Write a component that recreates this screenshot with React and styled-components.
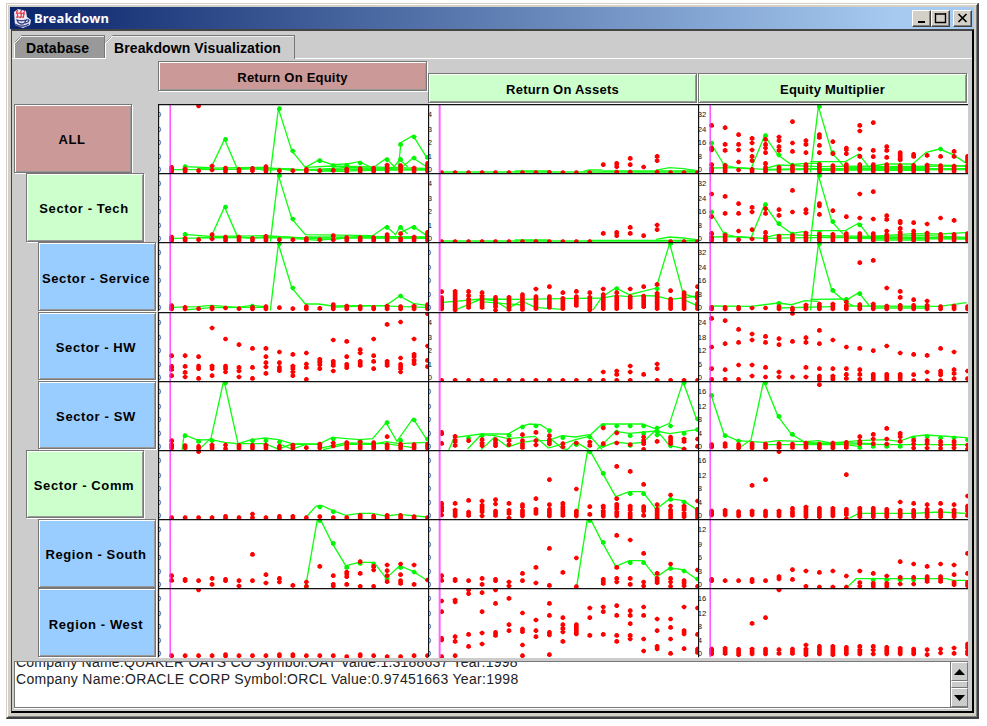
import React from "react";
import styled, { createGlobalStyle } from "styled-components";

const Global = createGlobalStyle`
  * { box-sizing: border-box; }
  body { margin: 0; background: #fff; font-family: "Liberation Sans", Arial, sans-serif; overflow: hidden; }
`;

const Window = styled.main`
  width: 973px;
  height: 716px;
  margin: 3px 0 0 6px;
  padding: 3px 3px 4px 3px;
  background: #d4d0c8;
  border: 1px solid #d4d0c8;
  border-right: 2px solid #404040;
  border-bottom: 2px solid #404040;
  box-shadow: inset 1px 1px #fff, inset -1px -1px #808080;
  display: flex;
  flex-direction: column;
`;

const TitleBar = styled.header`
  height: 22px;
  flex: none;
  display: flex;
  align-items: center;
  padding: 0 2px 0 3px;
  background: linear-gradient(90deg, #0a246a, #a6caf0 92%);
  color: #fff;
`;

const Title = styled.h1`
  margin: 0 auto 0 3px;
  font: bold 13px/20px "Noto Sans", sans-serif;
  letter-spacing: 0.2px;
`;

const WindowButton = styled.button`
  width: 19px;
  height: 17px;
  padding: 0;
  margin-left: ${(p) => (p.$gap ? "3px" : "0")};
  display: grid;
  place-items: center;
  background: #d4d0c8;
  border: 1px solid;
  border-color: #fff #404040 #404040 #fff;
  box-shadow: inset -1px -1px #808080;
`;

const Client = styled.section`
  flex: 1;
  min-height: 0;
  margin-left: 1px;
  display: flex;
  flex-direction: column;
  background: #ccc;
  border: 2px solid #000;
  border-top: 2px solid #444;
  border-left: 1px solid #444;
`;

const Tabs = styled.nav`
  display: flex;
  flex: none;
  height: 28px;
  padding: 4px 0 0 2px;
  box-shadow: inset 0 -1px #fff;
`;

const Tab = styled.button`
  width: ${(p) => p.$width}px;
  height: ${(p) => (p.$active ? 24 : 23)}px;
  padding: ${(p) => (p.$active ? "1px 0 0 9px" : "2px 0 0 12px")};
  border: 0;
  text-align: left;
  font: bold 14px "Liberation Sans", Arial, sans-serif;
  letter-spacing: ${(p) => p.$spacing}px;
  white-space: nowrap;
  color: #000;
  background: ${(p) => (p.$active ? "#ccc" : "#999")};
  clip-path: polygon(0 8px, 8px 0, 100% 0, 100% 100%, 0 100%);
  background-image: linear-gradient(135deg, transparent 5px, #777 5px, #777 6px, #fff 6px, #fff 7px, transparent 7px);
  box-shadow: inset 0 1px #777, inset -1px 0 #777, inset 1px 0 #fff, inset 0 2px #eee;
`;

const Board = styled.div`
  display: grid;
  grid-template-columns: 144px 810px;
  grid-template-rows: 45px 554px;
  padding-left: 2px;
  flex: none;
`;

const Headers = styled.div`
  grid-column: 2;
  display: grid;
  grid-template-columns: repeat(3, 270px);
`;

const Plate = styled.button`
  height: ${(p) => (p.$tall ? 68.5 : 30)}px;
  width: ${(p) => (p.$tall ? 118 : 269)}px;
  margin-left: ${(p) => p.$indent || 0}px;
  margin-top: ${(p) => p.$drop || 0}px;
  padding: ${(p) => (p.$tall ? "3px 2px 0 0" : "2px 0 0")};
  white-space: nowrap;
  color: #000;
  font: bold 13px "Liberation Sans", Arial, sans-serif;
  letter-spacing: ${(p) => (p.$tall ? 0.62 : 0.22)}px;
  background: ${(p) => p.$color};
  border: 1px solid #777;
  box-shadow: inset 1px 1px #fff, inset -1px -1px #999, 1px 1px #fff;
`;

const RowLabels = styled.div`
  display: grid;
  grid-template-rows: repeat(8, 69.2px);
`;

const Charts = styled.div`
  display: grid;
  grid-template-columns: repeat(3, 270px);
  grid-template-rows: repeat(8, 69.2px);
`;

const Plot = styled.svg`
  display: block;
  width: 270px;
  height: 69.2px;
  background: #fff;
  overflow: hidden;
`;

const Axis = styled.text`
  font: 23px "Liberation Sans", Arial, sans-serif;
  fill: #111;
`;

const Log = styled.div`
  flex: none;
  width: 954px;
  height: 47px;
  margin: 3px 0 0 2px;
  display: flex;
  background: #fff;
  border: 1px solid #777;
  border-right: 0;
  box-shadow: 0 1px #fff;
`;

const LogText = styled.div`
  flex: 1;
  height: 45px;
  overflow: hidden;
  padding-left: 1px;
`;

const LogLine = styled.p`
  margin: ${(p) => (p.$first ? "-8px" : "0")} 0 0;
  font-size: 14px;
  line-height: 17px;
  letter-spacing: ${(p) => p.$spacing}px;
  white-space: nowrap;
  color: #222;
`;

const ScrollBar = styled.div`
  width: 18px;
  display: grid;
  grid-template-rows: 19px 7px 19px;
  background: #ccc;
  border-left: 1px solid #777;
`;

const ScrollPart = styled.div`
  display: grid;
  place-items: center;
  background: #ccc;
  border: 1px solid;
  border-color: #fff #777 #777 #fff;
`;

const PINK = "#cc9999";
const MINT = "#ccffcc";
const SKY = "#99ccff";

const rows = [
  { label: "ALL", color: PINK, indent: 0 },
  { label: "Sector - Tech", color: MINT, indent: 12 },
  { label: "Sector - Service", color: SKY, indent: 24 },
  { label: "Sector - HW", color: SKY, indent: 24 },
  { label: "Sector - SW", color: SKY, indent: 24 },
  { label: "Sector - Comm", color: MINT, indent: 12 },
  { label: "Region - South", color: SKY, indent: 24 },
  { label: "Region - West", color: SKY, indent: 24 },
];

const ZERO = "0 0 0 0 0";
const ONES = "4 3 2 1 0";

// Each plot: top is the y of its upper edge; red lists marks (y or y-y spans) per year;
// green lists "year:y" marks; lines are "year y" pairs.
const plots = [
  {
    top: 20, axis: ZERO,
    red: "210-222,215-222,26 220,206 218,212-222,216-222,213-220,208-222,220,220,216-222,220,219,215-222,214-222,212-222,203-222,205-222,212-222,198-222",
    green: "1:208 4:126 8:34 9:161 11:190 12:205 13:204 14:197 16:187 17:141 17:186 18:119 18:182 19:180",
    lines: ["0 217 5 216 8 213 12 222 19 215", "1 208 3 211 4 126 4.95 214", "7.4 227 8 34 9 161 10 210 11 188 12 202 13 200 14 193 15 212 16 183 16.6 208 17 187 17.6 208", "16.9 215 17.1 136 18 114 19 180", "17 215 18 182 19 208", "10 210 12 206 19 213", "10 220 13 210 19 217", "2 213 7 210 9 219 11 216 15 214", "5 215 6 211 7 219 9 214", "10 216 19 218", "11 223 12 218 13 223"],
  },
  {
    top: 20, axis: ONES,
    red: "226,226,226,226,226,226,226,226,225,226,226,226,202,198 208 224,183 202 224,209,177 190 224,226,226,226",
    green: "", lines: ["0 224 19 224", "5.5 221 8 221", "10.6 222 11 218 12 218", "12 221 19 221", "16 218 17 211 18 214 19 220"],
  },
  {
    top: 20, axis: "32 24 16 8 0",
    red: "84 152-158 202 212-222,91 141 159 205-222,112 141 158 194 218,123 137 158 177 190 216-222,126 141 152 166 198 210-222,119 130 148 159 210-222,73 137 162 206-222,130 141 166 202-222,112-120 144 166 202-222,133 169 205-222,152-157 169 202-222,84 101 155 177 202-222,76 159 178 202-222,148 159 180 202-222,166-180 188 205-222,171 177 204-222,174 203-222,177 205-222,162 177 206-222,177-192 205-222",
    green: "0:137 1:203 4:115 5:173 6:203 8:27 8:199 9:166 17:155",
    lines: ["0 137 1 203 2 212 3 214 4 115 5 173 6 202 7 198 8 198", "0 212 2 211 4 216 7 214 19 214", "7.4 225 8 27 9 166 10 212", "7.4 193 10 193 11 170 11.8 212", "4 214 5 203 8 208 12 206 13 200 15 200 16 165 17 155 18 172 19 198", "10 212 12 208 19 206", "8 219 19 217", "16 202 19 206", "4 218 8 216 19 216", "12 211 16 211", "12 219 16 219"],
  },
  {
    top: 228, axis: ZERO,
    red: "420-430,424-430,428,413 426,420-430,420-430,424-430,418-430,428,428,425-430,428,416 428,422-430,422-430,422-430,413-430,410 425-430,420-430,406-430",
    green: "1:412 4:330 8:235 9:366 16:391 17:391 18:391",
    lines: ["0 424 5 422 19 424", "3 420 4 330 4.95 418", "7.4 434 8 235 9 366 10 413 15 416 16 388 16.7 413 17 391 17.6 410", "17 408 18 388 19 415", "1 412 3 418 7 416 12 428 14 418 19 420", "9 424 11 430 13 421", "2 421 5 420 6 424 7 419 9 421", "10 420 19 421"],
  },
  {
    top: 228, axis: ONES,
    red: "434,434,434,434,434,434,434,434,434,434,434,434,409,406 416,391 409,416,384 398,434,434,434",
    green: "", lines: ["0 432 19 432", "5.5 429 8 429", "11 430 19 430", "16 427 17 420 18 423 19 428"],
  },
  {
    top: 228, axis: "32 24 16 8 0",
    red: "291 359 409 420-430,298 349 415-430,320 349 402 428,331 345 398 426,335 349 406 418-430,338 355 418-430,280 345 416-430,338 348 408-430,320-327 352 412-430,341 412-430,359 410-430,291 363 410-430,284 366 410-430,356 367 402 413-430,373-378 394 406-430,377 402 410-430,381 408-430,363 412-430,370 412-430,410-430",
    green: "0:345 1:411 4:323 5:380 6:411 8:235 8:406 9:374 11:384",
    lines: ["0 345 1 411 2 420 3 422 4 323 5 380 6 409 7 403", "0 420 2 419 4 424 7 422 19 422", "7.4 434 8 235 9 374 10 418", "7.4 401 10 401 11 378 11.8 420", "4 422 5 412 8 416 12 418 15 410 17 411 19 407", "10 424 19 426", "12 418 16 416 19 421", "12 429 16 429", "8 420 19 423"],
  },
  {
    top: 436, axis: ZERO,
    red: "627-637,632-637,636,632-637,634,636,632-637,630-637,633,636,630-637,635,624-637,628-637,630-637,632-637,628-637,630-637,628-637,624-637",
    green: "6:628 8:442 9:574 17:598",
    lines: ["0 632 2 630 3 626 5 632 6 626 7 630", "7.4 641 8 442 9 574 10 622 11 622 12 628 16 626 17 598 18 620 19 626", "12 632 15 627 19 632", "1 640 3 633 7 632"],
  },
  {
    top: 436, axis: ZERO,
    red: "585 603-637,584-640,584 596 607-632,588 598-632,602-630 640,602-638,594-638,577 600-636,570 600-632,588 605-636,584 600-626,588 602-632 640,577 594-636,588 600-636,577 600-632,570 598-630,563 590-636,582 607-636,588-636,570 590-606 620-636",
    green: "13:576 16:576 17:440",
    lines: ["0 618 3 607 6 608 9 606 12 604 13 597 14 600 15 597 16 598 17 608 18 604 19 598", "1.2 638 3 607 4 612 5 636 6 612 7 632 9 638", "11.3 640 12 600 13 574 14 594 16 574 17 440 18 590 19.3 608", "17.8 604 18.3 613 19 626", "3 615 6 625"],
  },
  {
    top: 436, axis: "32 24 16 8 0",
    red: "632-637,632-637,632-637,634,634,630-637,634-640,625-637,622-637,622-637,616 626-637,498 624-637,491 622-637,574 628-637,584 602 626-637,609 626-637,613 626-637,630-637,628-637,630-637",
    green: "5:620 8:442 9:581 10:608 11:591",
    lines: ["0 628 3 629 5 619 6 624 7 612 8 614", "7.4 641 8 442 9 581 10 615 10.6 628", "7.4 608 10.2 607 11 588 11.8 628", "12 634 16 634", "10 628 17 629 19 618", "5 634 9 630"],
  },
  {
    top: 8, axis: ZERO,
    red: "139 171 180 199,139 171 189 203,142 170-178 207,56 170-178 199,89 170-178 188,106 174 185 203,117 174 207,117 142 160 173 192,128 160 174-184,135 170-178 188 199,131 164 174 210,150 158-166 178,92 156-168 185,96 142 165-175,121 131 156-168,89 139 156 178,45 156-168,38 146 165-177 188,89 135-142 153 163,13 110 153 172",
    green: "", lines: [],
  },
  {
    top: 8, axis: ONES,
    red: "213,213,213,213,213,213,213,213,213,213,213,213,188 213,185 195 213,170 188 213,195,164 178 213,213,213,213",
    green: "", lines: [],
  },
  {
    top: 8, axis: "24 18 12 6 0",
    red: "27 113 178 210,34 103 181 210,60 99 167 210,74 92 167 200,81 99 174 203,88 106 188 203,12 96 203,85 99 174 203,63 103 178 200-210,92 178 200-210,113 178 195 207,117 181 195 210,124 195-205 214,110 195-205 214,131 195-205 214,135 196 214,138 188 214,117 185-197 214,128 181 192 208,185 208",
    green: "", lines: [],
  },
  {
    top: 214, axis: ZERO,
    red: "393 405-415,408-415,410-416,406-416,406 417,407-416,407-416,406-416,410-416,406-416,414,403-415,400 409,399-416,397 408-416,399-416,381 405-416,403-416,405-416,403-416",
    green: "1:378 2:395 3:393 4:220 6:393 7:393 8:397 12:388 14:395 16:339 17:392 18:331 19:388",
    lines: ["0.85 421 1 375 2 391 3 390 4 398 5 402 6 390 7 385 8 390 9 402 11 403 12 383 14 390 15 387 16 339 16.8 395 18 326 19 388", "2.2 416 3 385 3.9 220 4 220 5 402 7 402 8 418", "8 402 9 418 10 405", "8 418 9 403 11 404", "11.3 420 13 404 15 404 16 396 17 402 19 398", "11 416 13 400 16 402 18 414"],
  },
  {
    top: 214, axis: ZERO,
    red: "368-372 401,380 392-396 407,393,390 400-408,390 398-408,392 405,375 393 403-413,368 393 406,378 390-403,402 412,400,397 407,355 402,370 400,405,382 392-402 419,395,382-402,388-395 418,388 410",
    green: "2:385 3:378 5:377 6:352 7:349 8:363 9:384 10:405 11:382 12:348 12:407 13:349 13:367 14:349 14:378 14:407 15:349 15:371 16:355 16:365 16:376 17:349 17:409 18:220 18:371 19:328 19:360",
    lines: ["0.6 421 1 384 3 373 5 373 6 350 6.6 343 7.4 345 8 360", "2 418 3 375 4 378 5 387 7 380 8 415 9 403 10 390 11 380 12 343 15 343 16 358 17 341 18 216 19 328", "3 420 4 382 5 412 6 398 7 393 8 392 9 378 10 382 11 375 12 420", "8 382 9 415 9.4 420 10 395 11 420", "11.6 420 13 365 14 371 16 364 17 372 19 360", "12 412 13 397 14 402 15 398 16 360 17 408 18 416"],
  },
  {
    top: 214, axis: "16 12 8 4 0",
    red: "405-412,402-410,405-415,402-415,403-413,402-413,403-413,400-413,225 403-415,400-415,398-413,381 395 403,374 388 402,356 388 403,371 381 395,392 403 415,392 402 415,395 405 416,395 405 415,406 418",
    green: "0:257 1:378 2:394 4:220 5:320 6:374 11:413 12:410 13:410 14:410 15:385 16:381 17:385 18:385 19:390",
    lines: ["0 252 1 375 2 393 4 398 5 393 7 396 8 393 9 400 11 393 13 390 14 395 15 380 16 376 19 384", "2 418 3 390 3.9 220 4 220 5 320 6 374 7 398 9 402 13 405 19 405", "4 405 10 405 11 410", "7 402 10 399 12 402"],
  },
  {
    top: 422, axis: ZERO,
    red: "625,625,427 625,625,621-626,625,614 625,625,621-626,621-626,625,622,625,625,618-626,620-626,618-626,618-626,622-626,625",
    green: "11:593 12:607",
    lines: ["10 626 10.8 590 11.2 588 12 603 13 618 14 612 15 612 16 620 17 615 19 623"],
  },
  {
    top: 422, axis: ZERO,
    red: "582 592-604 617,582 602-620,573 608-618,575 588 595-608 620,571 584 605-618,582 603-612 626,586-592 603-620,568 600-612,511 586 600-620,582 592-618,539 605-620,592 615,590-595 605-620,471 568 585-598 608-620,486 590-602 612-625,525 592-605 618,586 600-628,557 590 602-625,590-600 612-622,575 600-625",
    green: "11:428 12:492 14:553 15:553 17:570 18:578 19:600",
    lines: ["10.1 625 10.9 425 11.1 425 12 490 13 562 14 547 15 547 16 600 17 568 18 574 19 600"],
  },
  {
    top: 422, axis: "16 12 8 4 0",
    red: "605-617,603-617,607-620,528 605-617,511 605-620,427 605-620,597 607-618,593-622,597-622,597-620,496 600-615 628,597 607-622,597-622,600-622,578 603-622,582 603-622,586 600-622,582 603-622,586 602-622,560 590-605 618",
    green: "",
    lines: ["10.3 626 11 612 15 612 17 608 19 612"],
  },
  {
    top: 15, axis: ZERO,
    red: "185 199,196-200,200,193 211,196-200,200 216,121 200,182 207,193 204,214,204 217,157,185 211-216,174-180 188 211,143 178 217,157 168 217,153 170 185 203,150 182 200-208,153 211,198",
    green: "10:217 11:20 12:88 13:160 14:148 15:150 16:193 17:160 18:174",
    lines: ["10.1 200 10.9 15 11.1 15 12 88 13 155 14 145 15.1 145 16 193 17 155 18 172 19 198"],
  },
  {
    top: 15, axis: ZERO,
    red: "185 199,196-200,200,193 211,196-200,204 216,178 200,160 207,103 214,175,132 218,,196-208,64 160 193 204,78 193 211,118 204 216,178 193-206,150 193 204 217,200-206 215,168 217",
    green: "11:20 12:85 14:146 15:146 17:163 18:171 19:195",
    lines: ["10.1 218 10.9 13 11.1 13 12 85 13 157 14 140 15 140 16 190 17 162 18 167 19 195"],
  },
  {
    top: 15, axis: "12 9 6 3 0",
    red: "196-200,200,200,196-203,200,188-195,167 196,171 217,175 219,171 219,186 219,171 206 217,178 208-217,186 208-217,143 190 210,150 190 210,157 188-202,150 188-202,153 182 205-212,118 178 205-215",
    green: "12:198 13:198 14:198 15:198",
    lines: ["10.2 217 10.8 194 17.5 194 18 199 19 199"],
  },
  {
    top: 222, axis: ZERO,
    red: "425,425,228 425,425,422-426,425,425,425,422-426,422-426,425,425,425,428,422-426,425,428,428,425,425",
    green: "", lines: [],
  },
  {
    top: 222, axis: ZERO,
    red: "261 293 373-378 428,258-264 368 382 425,228 239 361 397,236 293 357 390,228 268 355-364,253 332 350,297 345-353 393 425,318 350 368,268 304 355-363 422,311 332 343 354 382,332-346 354-360,282 311 364,279 293 361,275 304 364 382,290 304 329 364 375,279 304 375 411,315 350 397-405,315 340 375 418,279 350-360 404,282 361 405-415",
    green: "", lines: [],
  },
  {
    top: 222, axis: "16 12 8 4 0",
    red: "405-420,403-418,406-422,328 405-420,311 405-420,228 407 418,405-418,393 405-422,397 405-420,397-422,400-420,397 408-420,397 408 420,400-420,403-420,405-420,407 422,405 417,402 418,390-402 412-420",
    green: "", lines: [],
  },
];

const xAt = (year) => 41 + year * 40.4;

function toPoints(line) {
  const n = line.split(" ").map(Number);
  const out = [];
  for (let i = 0; i < n.length; i += 2) out.push(`${xAt(n[i]) - 3},${n[i + 1]}`);
  return out.join(" ");
}

function Mark({ x, span, color }) {
  const [a, b = a] = span.split("-").map(Number);
  return (
    <path
      d={`M${x - 2.5} ${a - 7}h5l4.500 4.500V${b + 2.5}l-4.500 4.500h-5l-4.500 -4.500V${a - 2.5}z`}
      fill={color}
    />
  );
}

function Chart({ plot, column }) {
  const { top, axis, red, green, lines } = plot;
  return (
    <Plot viewBox={`0 ${top} 810 207.45`} preserveAspectRatio="none">
      {axis.split(" ").map((t, i) => (
        <Axis key={i} x={axis === ZERO ? -4 : -1} y={top + [40, 84, 123, 166, 205][i]}>{t}</Axis>
      ))}
      {lines.map((l, i) => (
        <polyline key={i} points={toPoints(l)} fill="none" stroke="#10ff10" strokeWidth="4" />
      ))}
      {green.split(" ").filter(Boolean).map((g, i) => {
        const [year, y] = g.split(":");
        return <Mark key={i} x={xAt(+year)} span={y} color="#00f500" />;
      })}
      {red.split(",").map((cell, year) =>
        cell.split(" ").filter(Boolean).map((s, i) => (
          <Mark key={`${year}-${i}`} x={xAt(year)} span={s} color="#ff0000" />
        ))
      )}
      <path d={`M${column === 1 ? 35 : 36.5} ${top}v208`} stroke={column === 1 ? "#ff66ff" : "#ff22ff"} strokeWidth={column === 1 ? 6 : 3.5} />
      <path d={`M1.500 ${top + 208}V${top + 1.5}H810`} fill="none" stroke="#111" strokeWidth="4" />
    </Plot>
  );
}

function JavaCup() {
  return (
    <svg width="18" height="19" viewBox="0 0 18 19" fill="none">
      <path d="M1 3l4-3 8 2 1 6 4 3-1 5-7 3-8-3z" fill="#e9e9f2" />
      <path d="M5 1c-4 3 2 4-1 8M9 1C5 4 11 5 7 9M12 2c-3 2 0 4-2 7M3 4c4 1 4-1 9 1M3 8h8" stroke="#e33a4a" strokeWidth="1.2" />
      <path d="M4 11c3 1 6 1 9 0-1 3-2 4-4 4s-4-1-5-4zM13 11c4-1 4 2-1 3M2 15c4 3 10 3 14 0" stroke="#38468c" strokeWidth="1.3" />
    </svg>
  );
}

export default function App() {
  return (
    <>
      <Global />
      <Window>
        <TitleBar>
          <JavaCup />
          <Title>Breakdown</Title>
          <WindowButton aria-label="Minimize">
            <svg width="13" height="12"><path d="M3 10h7" stroke="#000" strokeWidth="2" /></svg>
          </WindowButton>
          <WindowButton aria-label="Maximize">
            <svg width="13" height="12"><path d="M1.500 1v9.500h10V1M1 2h11" fill="none" stroke="#000" strokeWidth="1.4" /></svg>
          </WindowButton>
          <WindowButton aria-label="Close" $gap>
            <svg width="13" height="12"><path d="M2.500 2l8 8M10.500 2l-8 8" stroke="#000" strokeWidth="1.7" /></svg>
          </WindowButton>
        </TitleBar>
        <Client>
          <Tabs>
            <Tab $width={91} $spacing={0.1}>Database</Tab>
            <Tab $width={190} $spacing={0.1} $active>Breakdown Visualization</Tab>
          </Tabs>
          <Board>
            <Headers>
              <Plate $color={PINK} $drop={2}>Return On Equity</Plate>
              <Plate $color={MINT} $drop={14}>Return On Assets</Plate>
              <Plate $color={MINT} $drop={14}>Equity Multiplier</Plate>
            </Headers>
            <RowLabels>
              {rows.map((r) => (
                <Plate key={r.label} $tall $color={r.color} $indent={r.indent}>{r.label}</Plate>
              ))}
            </RowLabels>
            <Charts>
              {plots.map((p, i) => <Chart key={i} plot={p} column={i % 3} />)}
            </Charts>
          </Board>
          <Log>
            <LogText>
              <LogLine $first $spacing={0.22}>Company Name:QUAKER OATS CO Symbol:OAT Value:1.3188637 Year:1998</LogLine>
              <LogLine $spacing={0.31}>Company Name:ORACLE CORP Symbol:ORCL Value:0.97451663 Year:1998</LogLine>
            </LogText>
            <ScrollBar>
              <ScrollPart><svg width="11" height="6"><path d="M0 6l5.500-6 5.500 6z" /></svg></ScrollPart>
              <ScrollPart />
              <ScrollPart><svg width="11" height="6"><path d="M0 0l5.500 6 5.500-6z" /></svg></ScrollPart>
            </ScrollBar>
          </Log>
        </Client>
      </Window>
    </>
  );
}
